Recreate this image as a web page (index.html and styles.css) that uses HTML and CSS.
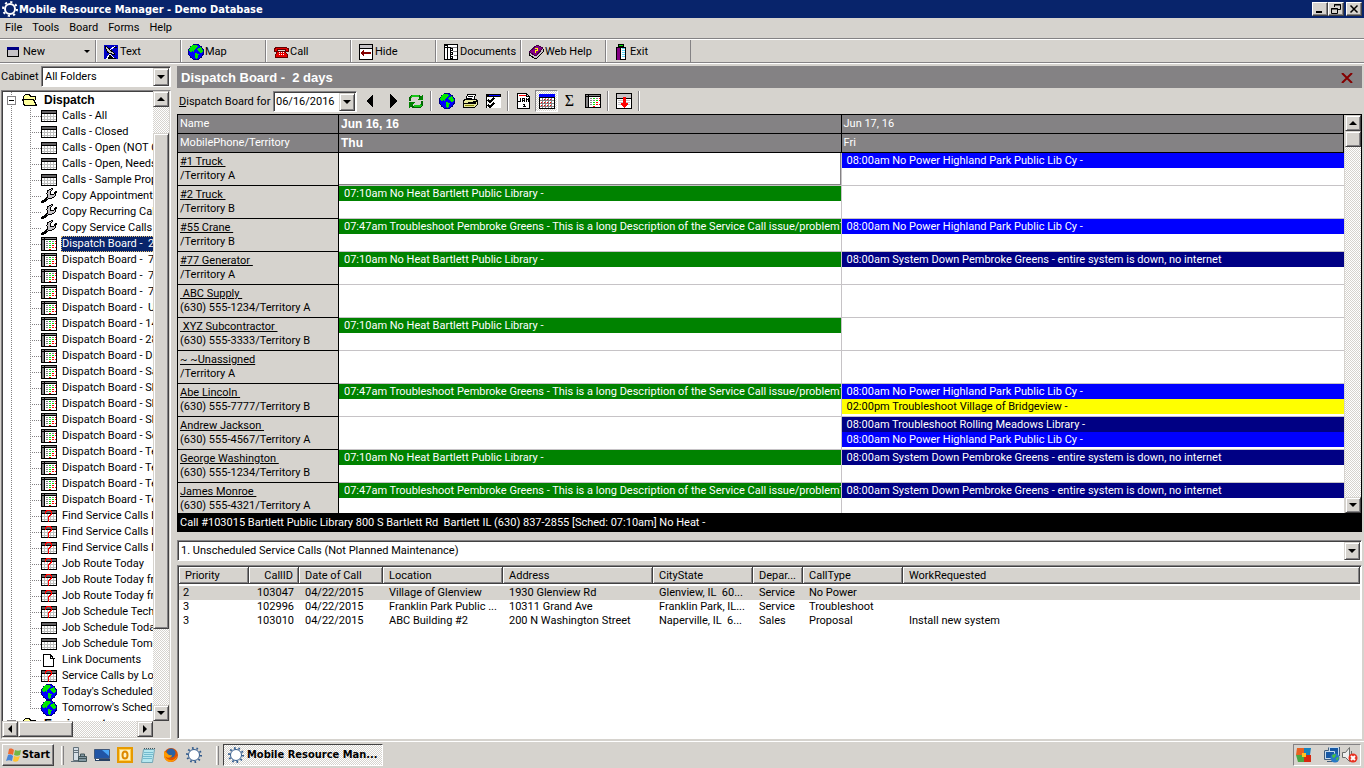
FILE: index.html
```html
<!DOCTYPE html>
<html lang="en">
<head>
<meta charset="utf-8">
<title>Mobile Resource Manager - Demo Database</title>
<link rel="stylesheet" href="styles.css">
</head>
<body>
<svg class="defs" width="0" height="0" aria-hidden="true">
  <symbol id="gear" viewBox="0 0 16 16"><circle cx="8" cy="8" r="5" fill="none" stroke="currentColor" stroke-width="2"/><circle cx="8" cy="8" r="7" fill="none" stroke="currentColor" stroke-width="2" stroke-dasharray="2.2 3.3"/></symbol>
  <symbol id="ring" viewBox="0 0 16 16"><circle cx="8" cy="8" r="5.5" fill="#fff" stroke="#315a8c"/><circle cx="8" cy="8" r="7" fill="none" stroke="#315a8c" stroke-width="2" stroke-dasharray="1.6 2.8"/></symbol>
  <symbol id="cal" viewBox="0 0 16 16"><path fill="#000" d="M0 2h16v12H0z"/><path fill="#636163" d="M1 3h14v2H1z"/><path fill="#fff" d="M1 6h14v7H1z"/><path stroke="#bdbebd" fill="none" d="M3.500 6v7M6.500 6v7M9.500 6v7M12.500 6v7M1 8.500h14M1 11.500h14"/></symbol>
  <symbol id="find" viewBox="0 0 16 16"><use href="#cal"/><path fill="none" stroke="#f00" d="M4.500 6V3.500h1v-1h4v1h1v3h-1v1h-1v1h-1v3M7.500 12v2"/></symbol>
  <symbol id="wrench" viewBox="0 0 16 16"><path d="M1 15l6-6M7 9C4 4 8 0 12 1L9 4l1 3 3-1 2-3c1 5-3 8-7 7l-6 5-2-1z" fill="#c6c3c6" stroke="#000"/></symbol>
  <symbol id="board" viewBox="0 0 16 16"><path fill="#000" d="M0 1h16v14H0z"/><path fill="#848284" d="M1 4h2v10H1zM1 2h2v1H1zM4 2h11v1H4z"/><path fill="#fff" d="M4 4h11v10H4z"/><path stroke="#848284" d="M5 5.500h2M5 7.500h2M5 9.500h2M5 11.500h2M8 7.500h2M11 5.500h2"/><path stroke="#00e700" d="M8 5.500h2M11 7.500h2M8 9.500h2M8 11.500h2"/><path stroke="#f00" d="M11 9.500h2M11 11.500h2M14 5.500h1M14 7.500h1M14 11.500h1M8 13.500h2"/></symbol>
  <symbol id="page" viewBox="0 0 16 16"><path fill="#fff" stroke="#000" d="M2.500 2.500h7l3 4v8h-10zM9.500 2.500v4h4"/></symbol>
  <symbol id="globe" viewBox="0 0 16 16"><circle cx="8" cy="8" r="8" fill="#000084"/><circle cx="8" cy="8" r="7" fill="#00f"/><path fill="#00e700" d="M2 3l3-2 4 0 1 2-3 2-1 3-2-1-1 2-2-2zM9 5l4-2 2 4-2 2-2-1zM7 9l4 1-1 3-2 2-1-3z"/></symbol>
  <symbol id="folder" viewBox="0 0 16 16"><path fill="#ffff9c" stroke="#000" d="M2.500 13.500l-1-1v-8l2-2h4l1 2h5v3M2.500 13.500l-2-6h11l3 6z"/></symbol>
  <symbol id="window" viewBox="0 0 16 16"><path fill="#c6c3c6" stroke="#000" d="M2.500 3.500h11v9h-11z"/><path fill="#000084" d="M2 3h12v3H2z"/></symbol>
  <symbol id="dish" viewBox="0 0 16 16"><path fill="#0000c6" d="M1 1h14v14H1z"/><path fill="#c6c3c6" stroke="#000" d="M3 2c-1 5 3 9 9 8z"/><path stroke="#fff" d="M7 6l5-4M4 14l3-4 4 4z"/><path stroke="#000" d="M11 3l3 0M5 14h8"/></symbol>
  <symbol id="phone" viewBox="0 0 16 16"><path fill="#e70000" stroke="#630000" d="M1 7.500v-3l3-1h9l2 1v3h-3v-2H4v2zM4.500 7.500h7l3 3v3h-12v-3z"/><path stroke="#fff" stroke-dasharray="1 1" d="M6 8.500h5M6 10.500h5"/></symbol>
  <symbol id="hide" viewBox="0 0 16 16"><path fill="#fff" stroke="#000" d="M1.500.5h13v15h-13z"/><path fill="#c6c3c6" d="M2 1h12v3H2z"/><path stroke="#000" d="M2 4.500h12"/><path fill="#840000" d="M2 9l4-3v2h7v2H6v2z"/></symbol>
  <symbol id="docs" viewBox="0 0 16 16"><path fill="#fff" stroke="#000" d="M1.500 .5h13v15h-13z"/><path fill="none" stroke="#848284" d="M8 3.500h6M10 7.500h4M11 11.500h3"/><path fill="#fff" stroke="#000" d="M4.500 1v15M4.500 3.500h3v10M7.500 4.500h2v2h-2zM7.500 8.500h2v2h-2zM7.500 12.500h2v2h-2z"/><path fill="#000" d="M2 3h2v1H2zM2 1h2v1H2z"/></symbol>
  <symbol id="book" viewBox="0 0 16 16"><path fill="#c6c3c6" stroke="#000" d="M1 9l8-8 6 4v3l-7 7-7-4z"/><path fill="#840084" stroke="#420042" d="M1 8l8-7 6 3-7 8z"/><path fill="none" stroke="#ff0" d="M6.500 4.500h3v1.500h-2v1.500M7 8.500h1"/></symbol>
  <symbol id="exit" viewBox="0 0 16 16"><path fill="#00e700" stroke="#000" d="M5.500.5h5v2h-5z"/><path fill="#fff" stroke="#000" d="M3.500 3.500h9v12h-9z"/><path fill="#840084" d="M4 4h3v12H4z"/><path stroke="#000" d="M7.500 4v12"/><path stroke="#5ad7f7" stroke-width="3" stroke-dasharray="1 1" d="M10 4v9"/></symbol>
  <symbol id="refresh" viewBox="0 0 16 16"><path fill="none" stroke="#006300" stroke-width="2" d="M2 8V5l2-2h7l2 2M14 8v4l-2 2H5l-2-2"/><path fill="none" stroke="#18c618" stroke-width="2" d="M3 4.500l1.500-1.500h6M13 12l-1 1H6"/><path fill="#008200" d="M9 7h6V2zM7 9H1v6z"/></symbol>
  <symbol id="printer" viewBox="0 0 16 16"><path fill="#fff" stroke="#000" d="M5.500 1.500h8l-2 6h-8z"/><path fill="#e7e79c" stroke="#000" d="M1.500 7.500l2-1h11l1 1v4l-3 3h-11z"/><path stroke="#000" d="M2 10.500h11l2-3M6 3.500h5M5 5.500h5"/><path stroke="#848200" d="M3 12.500h9"/></symbol>
  <symbol id="checks" viewBox="0 0 16 16"><path fill="#fff" d="M1 1h15v14H1z"/><path fill="#000" d="M1 1h15v3H1z"/><path fill="#00f" d="M4 2h11v1H4z"/><path fill="none" stroke="#000" stroke-width="1.500" d="M3 7l2 2 4-4M3 12l2 2 4-4"/><path stroke="#000" d="M1.500 4v11"/></symbol>
  <symbol id="jan" viewBox="0 0 16 16"><path fill="#fff" stroke="#000" d="M1.500.5h9l3 3v12h-12zM10.500.5v3h3"/><path stroke="#f00" d="M3 2.500h7"/><path fill="none" stroke="#000" d="M2 8.500h2.500V5M6.500 9V5.500h2V9M6.500 7.500h2M10.500 9V5M11 6.500h1M12.500 5v4M7 11.500h1.500V14M7 13.500h3"/></symbol>
  <symbol id="month" viewBox="0 0 16 16"><path fill="#000" d="M0 1h16v15H0z"/><path fill="#00f" d="M0 1h16v3H0z"/><path fill="#fff" d="M1 5h14v10H1z"/><path fill="none" stroke="#848284" d="M3.500 5v10M6.500 5v10M9.500 5v10M12.500 5v10M1 7.500h14M1 10.500h14M1 13.500h14"/><path stroke="#f00" stroke-dasharray="1 2" d="M2 9.500h12M2 12.500h12M5 6.500h9"/></symbol>
  <symbol id="down" viewBox="0 0 16 16"><path fill="#fff" stroke="#000" d="M.5.5h15v15H.5z"/><path fill="#c6c3c6" d="M1 1h14v4H1z"/><path stroke="#000" d="M0 5.500h16"/><path stroke="#c6c3c6" d="M2 7.500h12M2 9.500h12M2 11.500h12"/><path fill="#f00" d="M7 4h3v6h2v1l-3 4H8l-3-4v-1h2z"/></symbol>
  <symbol id="flag" viewBox="0 0 16 16"><path fill="#ef6b31" d="M3 2c2-1 4 0 5 1L7 8C6 7 4 7 2 7z"/><path fill="#73b642" d="M9 3c2 1 4 1 6 0l-1 5c-2 1-4 1-6 0z"/><path fill="#4a86d6" d="M2 8c2-1 4 0 5 1l-1 5c-2-1-4-1-6 0z"/><path fill="#ffc331" d="M8 9c2 1 4 1 6 0l-2 5c-2 1-4 1-5 0z"/></symbol>
  <symbol id="server" viewBox="0 0 16 16"><path fill="#d6dfe7" stroke="#63717b" d="M2.500.5h5v13h-5z"/><path stroke="#63717b" d="M3 3.500h4M3 5.500h4M0 14.500h8"/><path fill="#849aa5" stroke="#42555a" d="M7.500 9.500h8v5h-8zM9.500 9v-2h4v2M8 11.500h7"/></symbol>
  <symbol id="desktop" viewBox="0 0 16 16"><path fill="#2155a5" stroke="#42597b" d="M.5 2.500h15v9H.5z"/><path fill="#4aa6f7" d="M8 3h7v6z"/><path fill="#294163" d="M1 12h15v2H1z"/><path fill="#fff" d="M2 12h3v1H2z"/></symbol>
  <symbol id="outlook" viewBox="0 0 16 16"><path fill="#ffcf52" stroke="#e79a00" stroke-width="2" d="M1 1h14v14H1z"/><path fill="#fff3c6" d="M3 3h10v10H3z"/><ellipse cx="8" cy="8" rx="2.500" ry="3.500" fill="#fff3c6" stroke="#de8a00" stroke-width="2"/></symbol>
  <symbol id="notepad" viewBox="0 0 16 16"><path fill="#b5e7ef" stroke="#73a6b5" d="M3.500 2.500h11l-2 13H1.500z"/><path stroke="#73bace" d="M4 5.500h9M4 7.500h9M3 9.500h9M3 11.500h9"/><path stroke="#42555a" stroke-dasharray="1 1" d="M4 1.500h11"/></symbol>
  <symbol id="fox" viewBox="0 0 16 16"><circle cx="8" cy="8" r="7" fill="#de5100"/><circle cx="8" cy="6" r="4.500" fill="#2961a5"/><path fill="#ff9a00" d="M1 4c1 1 2 1 3 2s2 3 5 2c0 3-5 4-7 1 2 5 9 6 12 0-1 8-13 8-13-1z"/></symbol>
  <symbol id="quad" viewBox="0 0 16 16"><path fill="#e76121" d="M1 1h7v7H0z"/><path fill="#1882bd" d="M8 1h7l-1 7H8z"/><path fill="#4aa642" d="M0 8h8v7H2z"/><path fill="#d62810" d="M8 8h7v7H8z"/><path fill="#ffc321" d="M6 6h4v4H6z"/></symbol>
  <symbol id="network" viewBox="0 0 16 16"><path fill="#1859a5" stroke="#c6dbef" d="M5.500.5h9v8h-9z"/><path fill="#1859a5" stroke="#c6dbef" d="M1.500 4.500h9v7h-9z"/><path fill="none" stroke="#425d7b" d="M.5 3.500h4v-3M15.500 0v9M0.500 4v8.500h10M3 14.500h5"/><circle cx="11" cy="11" r="4.500" fill="#2979c6"/><path fill="#4ac631" d="M8 8l4-1-1 3-2 1zM12 11l3-1-2 4z"/></symbol>
  <symbol id="sound" viewBox="0 0 16 16"><path fill="#efefef" stroke="#6b6d6b" d="M.5 5.500h3l4-5v14l-4-4h-3zM9.500 4v4"/><circle cx="11" cy="11" r="4.500" fill="#e73121"/><path stroke="#fff" stroke-width="2" d="M9 9l4 4M13 9l-4 4"/></symbol>
</svg>

<header class="titlebar">
  <svg class="icon app-icon"><use href="#gear"/></svg>
  <h1 class="title">Mobile Resource Manager - Demo Database</h1>
  <div class="window-buttons">
    <button class="btn3d" aria-label="Minimize"><svg viewBox="0 0 12 10"><path d="M2 7h6v2H2z"/></svg></button>
    <button class="btn3d" aria-label="Restore"><svg viewBox="0 0 12 10"><path fill="none" stroke="#000" d="M4.500 3V.5h6v5H8M4 1h7M1.500 4.500h6v5h-6zM1 5h7"/></svg></button>
    <button class="btn3d close" aria-label="Close"><svg viewBox="0 0 12 10"><path stroke="#000" stroke-width="1.500" d="M2.500 1.500l7 7M9.500 1.500l-7 7"/></svg></button>
  </div>
</header>

<nav class="menubar">
  <button>File</button><button>Tools</button><button>Board</button><button>Forms</button><button>Help</button>
</nav>

<div class="toolbar" role="toolbar">
  <button class="tool tool-new"><svg class="icon"><use href="#window"/></svg>New<span class="tri-down small"></span></button>
  <button class="tool"><svg class="icon"><use href="#dish"/></svg>Text</button>
  <button class="tool"><svg class="icon"><use href="#globe"/></svg>Map</button>
  <button class="tool"><svg class="icon"><use href="#phone"/></svg>Call</button>
  <button class="tool"><svg class="icon"><use href="#hide"/></svg>Hide</button>
  <button class="tool"><svg class="icon"><use href="#docs"/></svg>Documents</button>
  <button class="tool"><svg class="icon"><use href="#book"/></svg>Web Help</button>
  <button class="tool"><svg class="icon"><use href="#exit"/></svg>Exit</button>
</div>

<main class="workspace">
  <aside class="sidebar">
    <div class="cabinet">
      <label for="cabinet">Cabinet</label>
      <div class="combo"><select id="cabinet"><option>All Folders</option></select><span class="combo-arrow btn3d"><span class="tri-down"></span></span></div>
    </div>
    <div class="tree-frame sunken">
      <div class="tree">
        <div class="root"><span class="toggle"></span><svg class="icon"><use href="#folder"/></svg><b>Dispatch</b></div>
        <ul class="branch">
          <li><svg class="icon"><use href="#cal"/></svg><span>Calls - All</span></li>
          <li><svg class="icon"><use href="#cal"/></svg><span>Calls - Closed</span></li>
          <li><svg class="icon"><use href="#cal"/></svg><span>Calls - Open (NOT Closed)</span></li>
          <li><svg class="icon"><use href="#cal"/></svg><span>Calls - Open, Needs</span></li>
          <li><svg class="icon"><use href="#cal"/></svg><span>Calls - Sample Proposal</span></li>
          <li><svg class="icon"><use href="#wrench"/></svg><span>Copy Appointments</span></li>
          <li><svg class="icon"><use href="#wrench"/></svg><span>Copy Recurring Calls</span></li>
          <li><svg class="icon"><use href="#wrench"/></svg><span>Copy Service Calls</span></li>
          <li class="selected"><svg class="icon"><use href="#board"/></svg><span>Dispatch Board -&nbsp; 2 days</span></li>
          <li><svg class="icon"><use href="#board"/></svg><span>Dispatch Board -&nbsp; 7 days</span></li>
          <li><svg class="icon"><use href="#board"/></svg><span>Dispatch Board -&nbsp; 7 days</span></li>
          <li><svg class="icon"><use href="#board"/></svg><span>Dispatch Board -&nbsp; 7 days</span></li>
          <li><svg class="icon"><use href="#board"/></svg><span>Dispatch Board -&nbsp; Unassigned</span></li>
          <li><svg class="icon"><use href="#board"/></svg><span>Dispatch Board - 14 days</span></li>
          <li><svg class="icon"><use href="#board"/></svg><span>Dispatch Board - 28 days</span></li>
          <li><svg class="icon"><use href="#board"/></svg><span>Dispatch Board - Day</span></li>
          <li><svg class="icon"><use href="#board"/></svg><span>Dispatch Board - Sales</span></li>
          <li><svg class="icon"><use href="#board"/></svg><span>Dispatch Board - Show</span></li>
          <li><svg class="icon"><use href="#board"/></svg><span>Dispatch Board - Show</span></li>
          <li><svg class="icon"><use href="#board"/></svg><span>Dispatch Board - Show</span></li>
          <li><svg class="icon"><use href="#board"/></svg><span>Dispatch Board - Sort</span></li>
          <li><svg class="icon"><use href="#board"/></svg><span>Dispatch Board - Tech</span></li>
          <li><svg class="icon"><use href="#board"/></svg><span>Dispatch Board - Tech</span></li>
          <li><svg class="icon"><use href="#board"/></svg><span>Dispatch Board - Tech</span></li>
          <li><svg class="icon"><use href="#board"/></svg><span>Dispatch Board - Tech</span></li>
          <li><svg class="icon"><use href="#find"/></svg><span>Find Service Calls by</span></li>
          <li><svg class="icon"><use href="#find"/></svg><span>Find Service Calls by</span></li>
          <li><svg class="icon"><use href="#find"/></svg><span>Find Service Calls by</span></li>
          <li><svg class="icon"><use href="#find"/></svg><span>Job Route Today</span></li>
          <li><svg class="icon"><use href="#find"/></svg><span>Job Route Today from</span></li>
          <li><svg class="icon"><use href="#find"/></svg><span>Job Route Today from</span></li>
          <li><svg class="icon"><use href="#find"/></svg><span>Job Schedule Tech</span></li>
          <li><svg class="icon"><use href="#cal"/></svg><span>Job Schedule Today</span></li>
          <li><svg class="icon"><use href="#cal"/></svg><span>Job Schedule Tomorrow</span></li>
          <li><svg class="icon"><use href="#page"/></svg><span>Link Documents</span></li>
          <li><svg class="icon"><use href="#find"/></svg><span>Service Calls by Location</span></li>
          <li><svg class="icon"><use href="#globe"/></svg><span>Today's Scheduled</span></li>
          <li><svg class="icon"><use href="#globe"/></svg><span>Tomorrow's Scheduled</span></li>
        </ul>
        <div class="root"><span class="toggle"></span><svg class="icon"><use href="#folder"/></svg><b>Equipment</b></div>
      </div>
      <div class="vscroll"><button class="btn3d" aria-label="Scroll up"><span class="tri-up"></span></button><span class="gap-top"></span><span class="thumb tree-thumb btn3d"></span><span class="gap-rest"></span><button class="btn3d" aria-label="Scroll down"><span class="tri-down"></span></button></div>
      <div class="hscroll"><button class="btn3d" aria-label="Scroll left"><span class="tri-left"></span></button><span class="thumb hthumb btn3d"></span><span class="gap-rest"></span><button class="btn3d" aria-label="Scroll right"><span class="tri-right"></span></button></div>
    </div>
  </aside>

  <section class="content">
    <div class="panel-title"><h2>Dispatch Board -&nbsp; 2 days</h2><button aria-label="Close board"><svg width="12" height="10" viewBox="0 0 12 10"><path stroke="#840000" stroke-width="2" d="M1 0l10 10M11 0L1 10"/></svg></button></div>
    <div class="board-tools">
      <label for="date"><u>D</u>ispatch Board for</label>
      <div class="combo date"><select id="date"><option>06/16/2016</option></select><span class="combo-arrow btn3d"><span class="tri-down"></span></span></div>
      <button aria-label="Previous"><svg class="icon"><path d="M11 1v14L4 8z"/></svg></button>
      <button aria-label="Next"><svg class="icon"><path d="M5 1v14l7-7z"/></svg></button>
      <button aria-label="Refresh"><svg class="icon"><use href="#refresh"/></svg></button>
      <span class="sep"></span>
      <button aria-label="Map"><svg class="icon"><use href="#globe"/></svg></button>
      <button aria-label="Print"><svg class="icon"><use href="#printer"/></svg></button>
      <button aria-label="Options"><svg class="icon"><use href="#checks"/></svg></button>
      <span class="sep"></span>
      <button aria-label="Day"><svg class="icon"><use href="#jan"/></svg></button>
      <button class="pressed" aria-label="Calendar"><svg class="icon"><use href="#month"/></svg></button>
      <button class="sigma" aria-label="Totals">Σ</button>
      <button aria-label="Board"><svg class="icon"><use href="#board"/></svg></button>
      <span class="sep"></span>
      <button aria-label="Collapse"><svg class="icon"><use href="#down"/></svg></button>
      <span class="sep"></span>
    </div>

    <div class="board">
      <div class="board-view">
        <table class="schedule">
          <colgroup><col class="c-name"><col><col></colgroup>
          <thead>
            <tr><th>Name</th><th class="today">Jun 16, 16</th><th>Jun 17, 16</th></tr>
            <tr><th>MobilePhone/Territory</th><th class="today">Thu</th><th>Fri</th></tr>
          </thead>
          <tbody>
            <tr><th><u>#1 Truck&nbsp;</u><br>/Territory A</th><td class="focus"></td><td><div class="ev blue">08:00am No Power Highland Park Public Lib Cy -</div></td></tr>
            <tr><th><u>#2 Truck&nbsp;</u><br>/Territory B</th><td><div class="ev green">07:10am No Heat Bartlett Public Library -</div></td><td></td></tr>
            <tr><th><u>#55 Crane&nbsp;</u><br>/Territory B</th><td><div class="ev green">07:47am Troubleshoot Pembroke Greens - This is a long Description of the Service Call issue/problemThe customer</div></td><td><div class="ev blue">08:00am No Power Highland Park Public Lib Cy -</div></td></tr>
            <tr><th><u>#77 Generator&nbsp;</u><br>/Territory A</th><td><div class="ev green">07:10am No Heat Bartlett Public Library -</div></td><td><div class="ev navy">08:00am System Down Pembroke Greens - entire system is down, no internet</div></td></tr>
            <tr><th><u>&nbsp;ABC Supply&nbsp;</u><br>(630) 555-1234/Territory A</th><td></td><td></td></tr>
            <tr><th><u>&nbsp;XYZ Subcontractor&nbsp;</u><br>(630) 555-3333/Territory B</th><td><div class="ev green">07:10am No Heat Bartlett Public Library -</div></td><td></td></tr>
            <tr><th><u>~ ~Unassigned</u><br>/Territory A</th><td></td><td></td></tr>
            <tr><th><u>Abe Lincoln&nbsp;</u><br>(630) 555-7777/Territory B</th><td><div class="ev green">07:47am Troubleshoot Pembroke Greens - This is a long Description of the Service Call issue/problemThe customer</div></td><td><div class="ev blue">08:00am No Power Highland Park Public Lib Cy -</div><div class="ev yellow">02:00pm Troubleshoot Village of Bridgeview -</div></td></tr>
            <tr><th><u>Andrew Jackson&nbsp;</u><br>(630) 555-4567/Territory A</th><td></td><td><div class="ev navy">08:00am Troubleshoot Rolling Meadows Library -</div><div class="ev blue">08:00am No Power Highland Park Public Lib Cy -</div></td></tr>
            <tr><th><u>George Washington&nbsp;</u><br>(630) 555-1234/Territory B</th><td><div class="ev green">07:10am No Heat Bartlett Public Library -</div></td><td><div class="ev navy">08:00am System Down Pembroke Greens - entire system is down, no internet</div></td></tr>
            <tr><th><u>James Monroe&nbsp;</u><br>(630) 555-4321/Territory A</th><td><div class="ev green">07:47am Troubleshoot Pembroke Greens - This is a long Description of the Service Call issue/problemThe customer</div></td><td><div class="ev navy">08:00am System Down Pembroke Greens - entire system is down, no internet</div></td></tr>
          </tbody>
        </table>
      </div>
      <div class="vscroll"><button class="btn3d" aria-label="Scroll up"><span class="tri-up"></span></button><span class="thumb board-thumb btn3d"></span><span class="gap-rest"></span><button class="btn3d" aria-label="Scroll down"><span class="tri-down"></span></button></div>
    </div>
    <div class="status">Call #103015 Bartlett Public Library 800 S Bartlett Rd&nbsp; Bartlett IL (630) 837-2855 [Sched: 07:10am] No Heat -</div>

    <div class="combo query"><select aria-label="Call list"><option>1. Unscheduled Service Calls (Not Planned Maintenance)</option></select><span class="combo-arrow btn3d"><span class="tri-down"></span></span></div>

    <div class="list sunken">
      <table class="calls">
        <colgroup><col class="w70"><col class="w50"><col class="w84"><col class="w120"><col class="w150"><col class="w100"><col class="w50"><col class="w100"><col></colgroup>
        <thead><tr><th>Priority</th><th class="num">CallID</th><th>Date of Call</th><th>Location</th><th>Address</th><th>CityState</th><th>Depar...</th><th>CallType</th><th>WorkRequested</th></tr></thead>
        <tbody>
          <tr class="current"><td>2</td><td class="num">103047</td><td>04/22/2015</td><td>Village of Glenview</td><td>1930 Glenview Rd</td><td>Glenview, IL&nbsp; 60...</td><td>Service</td><td>No Power</td><td></td></tr>
          <tr><td>3</td><td class="num">102996</td><td>04/22/2015</td><td>Franklin Park Public ...</td><td>10311 Grand Ave</td><td>Franklin Park, IL...</td><td>Service</td><td>Troubleshoot</td><td></td></tr>
          <tr><td>3</td><td class="num">103010</td><td>04/22/2015</td><td>ABC Building #2</td><td>200 N Washington Street</td><td>Naperville, IL&nbsp; 6...</td><td>Sales</td><td>Proposal</td><td>Install new system</td></tr>
        </tbody>
      </table>
    </div>
  </section>
</main>

<footer class="taskbar">
  <button class="start btn3d"><svg class="icon"><use href="#flag"/></svg>Start</button>
  <span class="grip"></span>
  <div class="quick">
    <button aria-label="Server Manager"><svg class="icon"><use href="#server"/></svg></button>
    <button aria-label="Desktop"><svg class="icon"><use href="#desktop"/></svg></button>
    <button aria-label="Outlook"><svg class="icon"><use href="#outlook"/></svg></button>
    <button aria-label="Notepad"><svg class="icon"><use href="#notepad"/></svg></button>
    <button aria-label="Firefox"><svg class="icon"><use href="#fox"/></svg></button>
    <button aria-label="Mobile Resource Manager"><svg class="icon"><use href="#ring"/></svg></button>
  </div>
  <span class="grip"></span>
  <button class="task"><svg class="icon"><use href="#ring"/></svg>Mobile Resource Man...</button>
  <div class="tray"><svg class="icon"><use href="#quad"/></svg><svg class="icon"><use href="#network"/></svg><svg class="icon"><use href="#sound"/></svg></div>
</footer>
</body>
</html>
```

FILE: styles.css
```css
:root {
  --face: #d6d3ce;
  --gray: #848284;
  --dark: #424142;
  --navy: #08246b;
  --ui: Roboto, "Liberation Sans", Arial, sans-serif;
  --ui-bold: "Liberation Sans", Arial, sans-serif;
  --tahoma: "DejaVu Sans Condensed", "DejaVu Sans", sans-serif;
}
* { box-sizing: border-box; }
body {
  margin: 0;
  height: 100vh;
  display: flex;
  flex-direction: column;
  overflow: hidden;
  background: var(--face);
  color: #000;
  font: 11px/14px var(--ui);
}
button {
  margin: 0;
  padding: 0;
  border: 0;
  background: none;
  font: inherit;
  color: inherit;
  display: flex;
  align-items: center;
}
h1, h2, ul { margin: 0; padding: 0; }
.defs { position: absolute; }
.icon { width: 16px; height: 16px; flex: none; display: block; shape-rendering: crispEdges; }
.titlebar .icon, .taskbar .icon { shape-rendering: auto; }

.btn3d {
  display: flex;
  align-items: center;
  justify-content: center;
  background: var(--face);
  border: 1px solid;
  border-color: var(--face) var(--dark) var(--dark) var(--face);
  box-shadow: inset 1px 1px #fff, inset -1px -1px var(--gray);
}
.sunken, .combo {
  border: 1px solid;
  border-color: var(--gray) #fff #fff var(--gray);
}
.tri-down, .tri-up, .tri-left, .tri-right { width: 0; height: 0; border: 4px solid transparent; }
.tri-down { border-top-color: #000; border-bottom-width: 0; }
.tri-up { border-bottom-color: #000; border-top-width: 0; }
.tri-left { border-right-color: #000; border-left-width: 0; }
.tri-right { border-left-color: #000; border-right-width: 0; }
.tri-down.small { border-width: 3px 3px 0; }

/* window chrome */
.titlebar {
  flex: none;
  height: 18px;
  display: flex;
  align-items: center;
  padding: 0 2px;
  gap: 1px;
  background: var(--navy);
  color: #fff;
}
.title { flex: 1; padding-top: 1px; font: bold 11px/16px var(--tahoma); }
.window-buttons { display: flex; }
.window-buttons .btn3d { width: 16px; height: 14px; border-color: #fff var(--dark) var(--dark) #fff; box-shadow: inset -1px -1px var(--gray); }
.window-buttons .close { margin-left: 2px; }
.window-buttons svg { width: 12px; height: 10px; }

.menubar { flex: none; height: 21px; display: flex; gap: 10px; padding: 0 5px; border-bottom: 1px solid var(--gray); }
.toolbar { flex: none; height: 24px; display: flex; border-top: 1px solid #fff; border-bottom: 1px solid var(--gray); }
.tool { width: 85px; gap: 1px; padding: 1px 0 0 6px; border-left: 1px solid #fff; border-right: 1px solid var(--gray); white-space: nowrap; }
.tool-new { width: 96px; gap: 2px; padding-left: 5px; border-left: 0; }
.tool-new .tri-down { margin: 0 5px 0 auto; }

.workspace { flex: 1; min-height: 0; display: flex; border-top: 1px solid #fff; padding: 2px 2px 2px 1px; }

/* combo box */
.combo { position: relative; height: 21px; background: #fff; box-shadow: inset 1px 1px var(--dark); }
.combo select {
  appearance: none;
  width: 100%;
  height: 100%;
  padding: 1px 18px 0 3px;
  border: 0;
  background: none;
  font: inherit;
  color: inherit;
}
.combo-arrow { position: absolute; top: 1px; right: 1px; bottom: 0; width: 16px; pointer-events: none; }

/* scroll bars */
.vscroll, .hscroll {
  display: flex;
  background: conic-gradient(#fff 25%, var(--face) 0 50%, #fff 0 75%, var(--face) 0) 0 0 / 2px 2px;
}
.vscroll { width: 16px; flex-direction: column; }
.vscroll button, .hscroll button { width: 16px; height: 16px; flex: none; }
.gap-rest { flex: 1; }

/* folder tree */
.sidebar { flex: none; width: 170px; margin-right: 6px; display: flex; flex-direction: column; gap: 3px; }
.cabinet { display: flex; align-items: center; justify-content: space-between; }
.cabinet label { padding-top: 1px; }
.cabinet .combo { width: 130px; }
.tree-frame {
  flex: 1;
  min-height: 0;
  display: grid;
  grid-template: minmax(0, 1fr) 16px / minmax(0, 1fr) 16px;
  padding: 0 1px 1px 0;
  background: var(--face);
}
.tree {
  overflow: hidden;
  padding-left: 5px;
  border-left: 1px solid var(--dark);
  border-top: 1px solid var(--dark);
  background: #fff repeating-linear-gradient(var(--gray) 0 1px, #fff 1px 2px) 8px 0 / 1px 100% no-repeat;
}
.root { display: flex; align-items: center; height: 16px; gap: 6px; margin-left: -1px; font: 12px/16px var(--ui-bold); }
.toggle { width: 9px; height: 9px; border: 1px solid var(--gray); background: linear-gradient(#000, #000) center / 5px 1px no-repeat #fff; }
.branch { list-style: none; padding-left: 22px; }
.branch li {
  height: 16px;
  display: flex;
  align-items: center;
  gap: 4px;
  padding-left: 11px;
  white-space: nowrap;
  background:
    repeating-linear-gradient(var(--gray) 0 1px, transparent 1px 2px) 0 0 / 1px 100% no-repeat,
    repeating-linear-gradient(90deg, var(--gray) 0 1px, transparent 1px 2px) 0 8px / 11px 1px no-repeat;
}
.branch li:last-child { background-size: 1px 8px, 11px 1px; }
.branch li span { padding: 0 1px; line-height: 16px; }
.branch .selected span { background: var(--navy); color: #fff; outline: 1px dotted #e7c373; outline-offset: -1px; }
.gap-top { flex: 0 0 26px; }
.tree-thumb { flex: 0 1 496px; }
.hthumb { width: 55px; }

/* board */
.content { flex: 1; min-width: 0; display: flex; flex-direction: column; }
.panel-title {
  flex: none;
  height: 22px;
  display: flex;
  align-items: center;
  justify-content: space-between;
  padding: 1px 9px 0 4px;
  background: var(--gray);
  color: #fff;
}
.panel-title h2 { font: bold 13px/21px var(--ui-bold); }
.board-tools { flex: none; height: 26px; display: flex; align-items: center; padding-left: 2px; }
.board-tools label { width: 94px; padding-top: 1px; }
.board-tools button { width: 23px; height: 22px; justify-content: center; }
.combo.date { width: 84px; margin-right: 1px; }
.date select { padding-left: 2px; }
.sep { width: 2px; height: 20px; margin: 0 3px; border-left: 1px solid var(--gray); border-right: 1px solid #fff; }
.board-tools .pressed {
  border: 1px solid;
  border-color: var(--gray) #fff #fff var(--gray);
  background: conic-gradient(#fff 25%, var(--face) 0 50%, #fff 0 75%, var(--face) 0) 0 0 / 2px 2px;
}
.board-tools .sigma { font: 16px/20px "Liberation Serif", serif; }

.board { flex: 1; min-height: 0; display: flex; border: 1px solid #000; border-bottom: 0; }
.board-view { flex: 1; min-width: 0; overflow: hidden; background: #fff; }
.board .vscroll { width: 17px; border-left: 1px solid var(--face); }
.board-thumb { flex: 0 0 16px; }
table { border-collapse: separate; border-spacing: 0; table-layout: fixed; width: 100%; }
th, td { padding: 0; text-align: left; font-weight: normal; overflow: hidden; white-space: nowrap; }
.c-name { width: 161px; }
.schedule thead th { height: 19px; padding: 0 2px 1px; background: var(--gray); color: #fff; border-bottom: 1px solid #000; border-right: 1px solid #000; }
.schedule thead .today { font: bold 12px/14px var(--ui-bold); }
.schedule tbody th { height: 33px; padding: 2px 2px 2px; background: var(--face); border-right: 1px solid #000; border-bottom: 1px solid #000; }
.schedule td { height: 33px; vertical-align: top; border-bottom: 1px solid #c6c3c6; }
.schedule td:nth-child(2) { border-right: 1px solid #c6c3c6; }
.schedule td.focus { box-shadow: inset -1px -1px var(--gray); }
.ev { height: 15px; padding: 1px 0 0 5px; line-height: 14px; overflow: hidden; color: #fff; }
.green { background: #008200; }
.blue { background: #00f; }
.navy { background: #000084; }
.yellow { background: #ff0; color: #000; }
.status { flex: none; height: 19px; padding: 1px 3px 0; background: #000; color: #fff; line-height: 18px; white-space: nowrap; overflow: hidden; }

/* unscheduled calls */
.query { flex: none; margin: 8px 0 4px; }
.list { flex: none; height: 174px; padding: 1px; background: #fff; box-shadow: inset 1px 1px var(--dark); }
.calls thead th {
  height: 17px;
  padding: 1px 6px 0;
  background: var(--face);
  border-bottom: 1px solid var(--dark);
  border-right: 1px solid var(--dark);
  box-shadow: inset 1px 1px #fff, inset -1px -1px var(--gray);
}
.calls tbody::before { content: ""; display: block; height: 2px; }
.calls td { height: 14px; padding: 0 6px; }
.calls td:first-child { padding-left: 4px; }
.calls .num { text-align: right; padding-right: 5px; }
.current td { background: var(--face); }
.w50 { width: 50px; } .w70 { width: 70px; } .w84 { width: 84px; }
.w100 { width: 100px; } .w120 { width: 120px; } .w150 { width: 150px; }

/* task bar */
.taskbar { flex: none; height: 27px; display: flex; align-items: center; padding: 0 3px 0 2px; border-top: 1px solid #fff; font: bold 11px/14px var(--tahoma); }
.start { width: 52px; height: 22px; border-color: #fff var(--dark) var(--dark) #fff; box-shadow: inset -1px -1px var(--gray); }
.grip { width: 3px; height: 19px; margin: 0 4px 0 7px; border-left: 1px solid #fff; border-right: 1px solid var(--gray); }
.quick { display: flex; gap: 7px; width: 141px; padding-left: 3px; }
.task {
  width: 160px;
  height: 22px;
  gap: 3px;
  padding-left: 4px;
  white-space: nowrap;
  border: 1px solid;
  border-color: var(--dark) #fff #fff var(--dark);
  background: conic-gradient(#fff 25%, var(--face) 0 50%, #fff 0 75%, var(--face) 0) 0 0 / 2px 2px;
}
.tray { display: flex; align-items: center; gap: 2px; height: 22px; margin-left: auto; padding: 0 2px; border: 1px solid; border-color: var(--gray) #fff #fff var(--gray); }
.tray .icon:first-child { margin-right: 10px; }
```
